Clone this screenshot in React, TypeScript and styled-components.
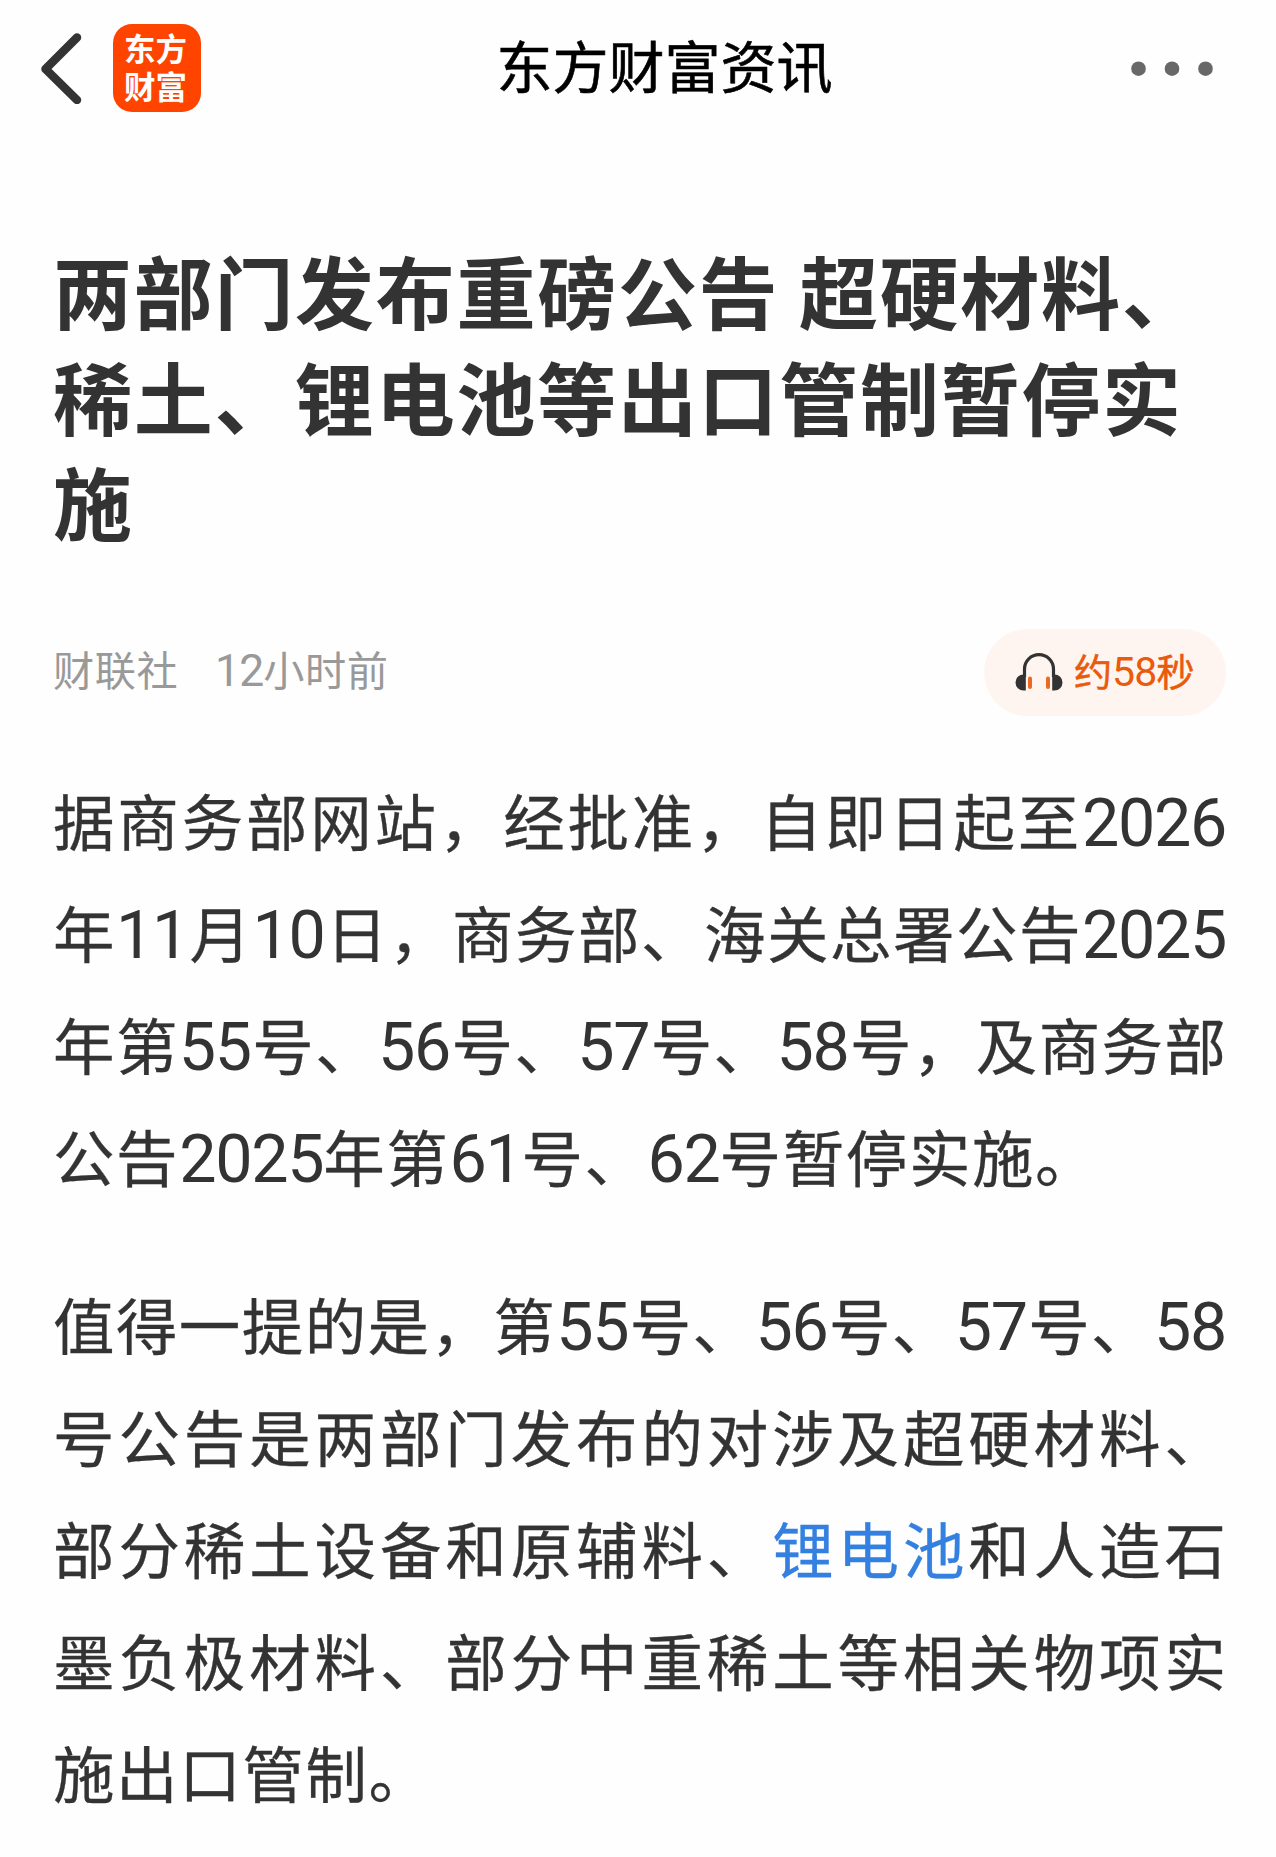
import React from "react";
import styled, { createGlobalStyle } from "styled-components";

const GlobalStyle = createGlobalStyle`
  * { box-sizing: border-box; }
  body {
    margin: 0;
    background: #fefefe;
    color: #333;
    font-family: "Noto Sans CJK SC", sans-serif;
  }
`;

const Page = styled.div`
  width: 1276px;
  height: 1857px;
  overflow: hidden;
`;

const Header = styled.header`
  display: grid;
  grid-template-columns: 300px 1fr 300px;
  align-items: center;
  height: 136px;
  padding: 0 0 0 40px;
`;

const HeaderStart = styled.div`
  display: flex;
  align-items: center;
  gap: 30px;
`;

const IconButton = styled.button`
  display: flex;
  padding: 0;
  border: 0;
  background: none;
`;

const Logo = styled.div`
  display: flex;
  flex-direction: column;
  align-items: center;
  justify-content: center;
  width: 88px;
  height: 88px;
  border-radius: 19px;
  background: #ff4400;
  color: #fff;
  font-size: 31.5px;
  font-weight: 700;
  line-height: 38px;
  padding: 0 3px 5px 0;
`;

const HeaderTitle = styled.div`
  font-size: 56px;
  line-height: 80px;
  color: #000;
  text-align: center;
  white-space: nowrap;
  padding: 0 0 9px 13px;
  -webkit-text-stroke: 0.6px #000;
`;

const HeaderEnd = styled.div`
  display: flex;
  justify-content: flex-end;
  padding-right: 63px;
`;

const Article = styled.main`
  padding: 101px 50px 0 53px;
`;

const Headline = styled.h1`
  margin: 0;
  font-size: 79px;
  font-weight: 700;
  line-height: 105.5px;
  letter-spacing: 1.7px;
  white-space: nowrap;
`;

const MetaRow = styled.div`
  display: flex;
  align-items: center;
  justify-content: space-between;
  height: 87px;
  margin-top: 75px;
`;

const Meta = styled.div`
  display: flex;
  gap: 37px;
  padding-bottom: 6px;
  color: #999;
  font-size: 41.2px;
  line-height: 60px;
  letter-spacing: 0.5px;
`;

const ListenButton = styled.button`
  display: flex;
  align-items: center;
  gap: 11px;
  width: 242px;
  height: 87px;
  padding: 0 0 0 31px;
  border: 0;
  border-radius: 44px;
  background: #fef5f1;
  color: #ea5a0b;
  font-family: inherit;
  font-size: 38px;
  line-height: 56px;
  white-space: nowrap;
`;

const ListenLabel = styled.span`
  padding-bottom: 3px;
  -webkit-text-stroke: 0.5px #ea5a0b;
`;

const Digits = styled.span`
  font-family: Roboto, sans-serif;
  font-size: 1.08em;
  letter-spacing: -0.02em;
  -webkit-text-stroke: 0;
`;

const Body = styled.section`
  padding-top: 48px;
`;

const Paragraph = styled.p`
  margin: 0 0 56px;
  font-size: 61.5px;
  line-height: 112px;
  -webkit-text-stroke: 0.3px;
`;

const Line = styled.span<{ $last?: boolean }>`
  display: block;
  height: 112px;
  white-space: nowrap;
  text-align: justify;
  text-align-last: ${(p) => (p.$last ? "left" : "justify")};
  letter-spacing: ${(p) => (p.$last ? "1.6px" : "0")};
`;

const Link = styled.a`
  color: #3480e0;
`;

const BackIcon = () => (
  <svg width="43" height="72" viewBox="0 0 43 72" fill="none">
    <path d="M37 5.5 5.5 37 37 68" stroke="#333" strokeWidth="8.5" strokeLinecap="round" strokeLinejoin="round" />
  </svg>
);

const MoreIcon = () => (
  <svg width="82" height="16" viewBox="0 0 82 16" fill="#686868">
    <circle cx="7.5" cy="8.7" r="7.3" />
    <circle cx="41" cy="8.7" r="7.3" />
    <circle cx="74.5" cy="8.7" r="7.3" />
  </svg>
);

const HeadphonesIcon = () => (
  <svg width="48" height="38" viewBox="0 0 48 38" fill="none">
    <path d="M9.5 24V16a14.5 14.3 0 0 1 29 0v8" stroke="#333" strokeWidth="3.2" />
    <path d="M10.8 20.5v17H8.5a8 8 0 0 1 0-16z" fill="#333" />
    <path d="M37.2 20.5v17h2.3a8 8 0 0 0 0-16z" fill="#333" />
    <path d="M15 25.5v8.5M33 25.5v8.5" stroke="#ea6a20" strokeWidth="4" strokeLinecap="round" />
  </svg>
);

const body: { text: string; link?: string }[][] = [
  [
    { text: "据商务部网站，经批准，自即日起至2026" },
    { text: "年11月10日，商务部、海关总署公告2025" },
    { text: "年第55号、56号、57号、58号，及商务部" },
    { text: "公告2025年第61号、62号暂停实施。" },
  ],
  [
    { text: "值得一提的是，第55号、56号、57号、58" },
    { text: "号公告是两部门发布的对涉及超硬材料、" },
    { text: "部分稀土设备和原辅料、锂电池和人造石", link: "锂电池" },
    { text: "墨负极材料、部分中重稀土等相关物项实" },
    { text: "施出口管制。" },
  ],
];

const renderText = (text: string, link?: string) =>
  text.split(link ? new RegExp(`(${link}|\\d+)`) : /(\d+)/).map((part, i) => {
    if (link && part === link) return <Link key={i}>{part}</Link>;
    return /^\d+$/.test(part) ? <Digits key={i}>{part}</Digits> : part;
  });

export default function App() {
  return (
    <Page lang="zh-CN">
      <GlobalStyle />
      <Header>
        <HeaderStart>
          <IconButton aria-label="返回"><BackIcon /></IconButton>
          <Logo>
            <span>东方</span>
            <span>财富</span>
          </Logo>
        </HeaderStart>
        <HeaderTitle>东方财富资讯</HeaderTitle>
        <HeaderEnd>
          <IconButton aria-label="更多"><MoreIcon /></IconButton>
        </HeaderEnd>
      </Header>
      <Article>
        <Headline>
          两部门发布重磅公告 超硬材料、<br />
          稀土、锂电池等出口管制暂停实<br />
          施
        </Headline>
        <MetaRow>
          <Meta>
            <span>财联社</span>
            <span><Digits>12</Digits>小时前</span>
          </Meta>
          <ListenButton>
            <HeadphonesIcon />
            <ListenLabel>约<Digits>58</Digits>秒</ListenLabel>
          </ListenButton>
        </MetaRow>
        <Body>
          {body.map((lines, p) => (
            <Paragraph key={p}>
              {lines.map((line, i) => (
                <Line key={i} $last={i === lines.length - 1}>
                  {renderText(line.text, line.link)}
                </Line>
              ))}
            </Paragraph>
          ))}
        </Body>
      </Article>
    </Page>
  );
}
